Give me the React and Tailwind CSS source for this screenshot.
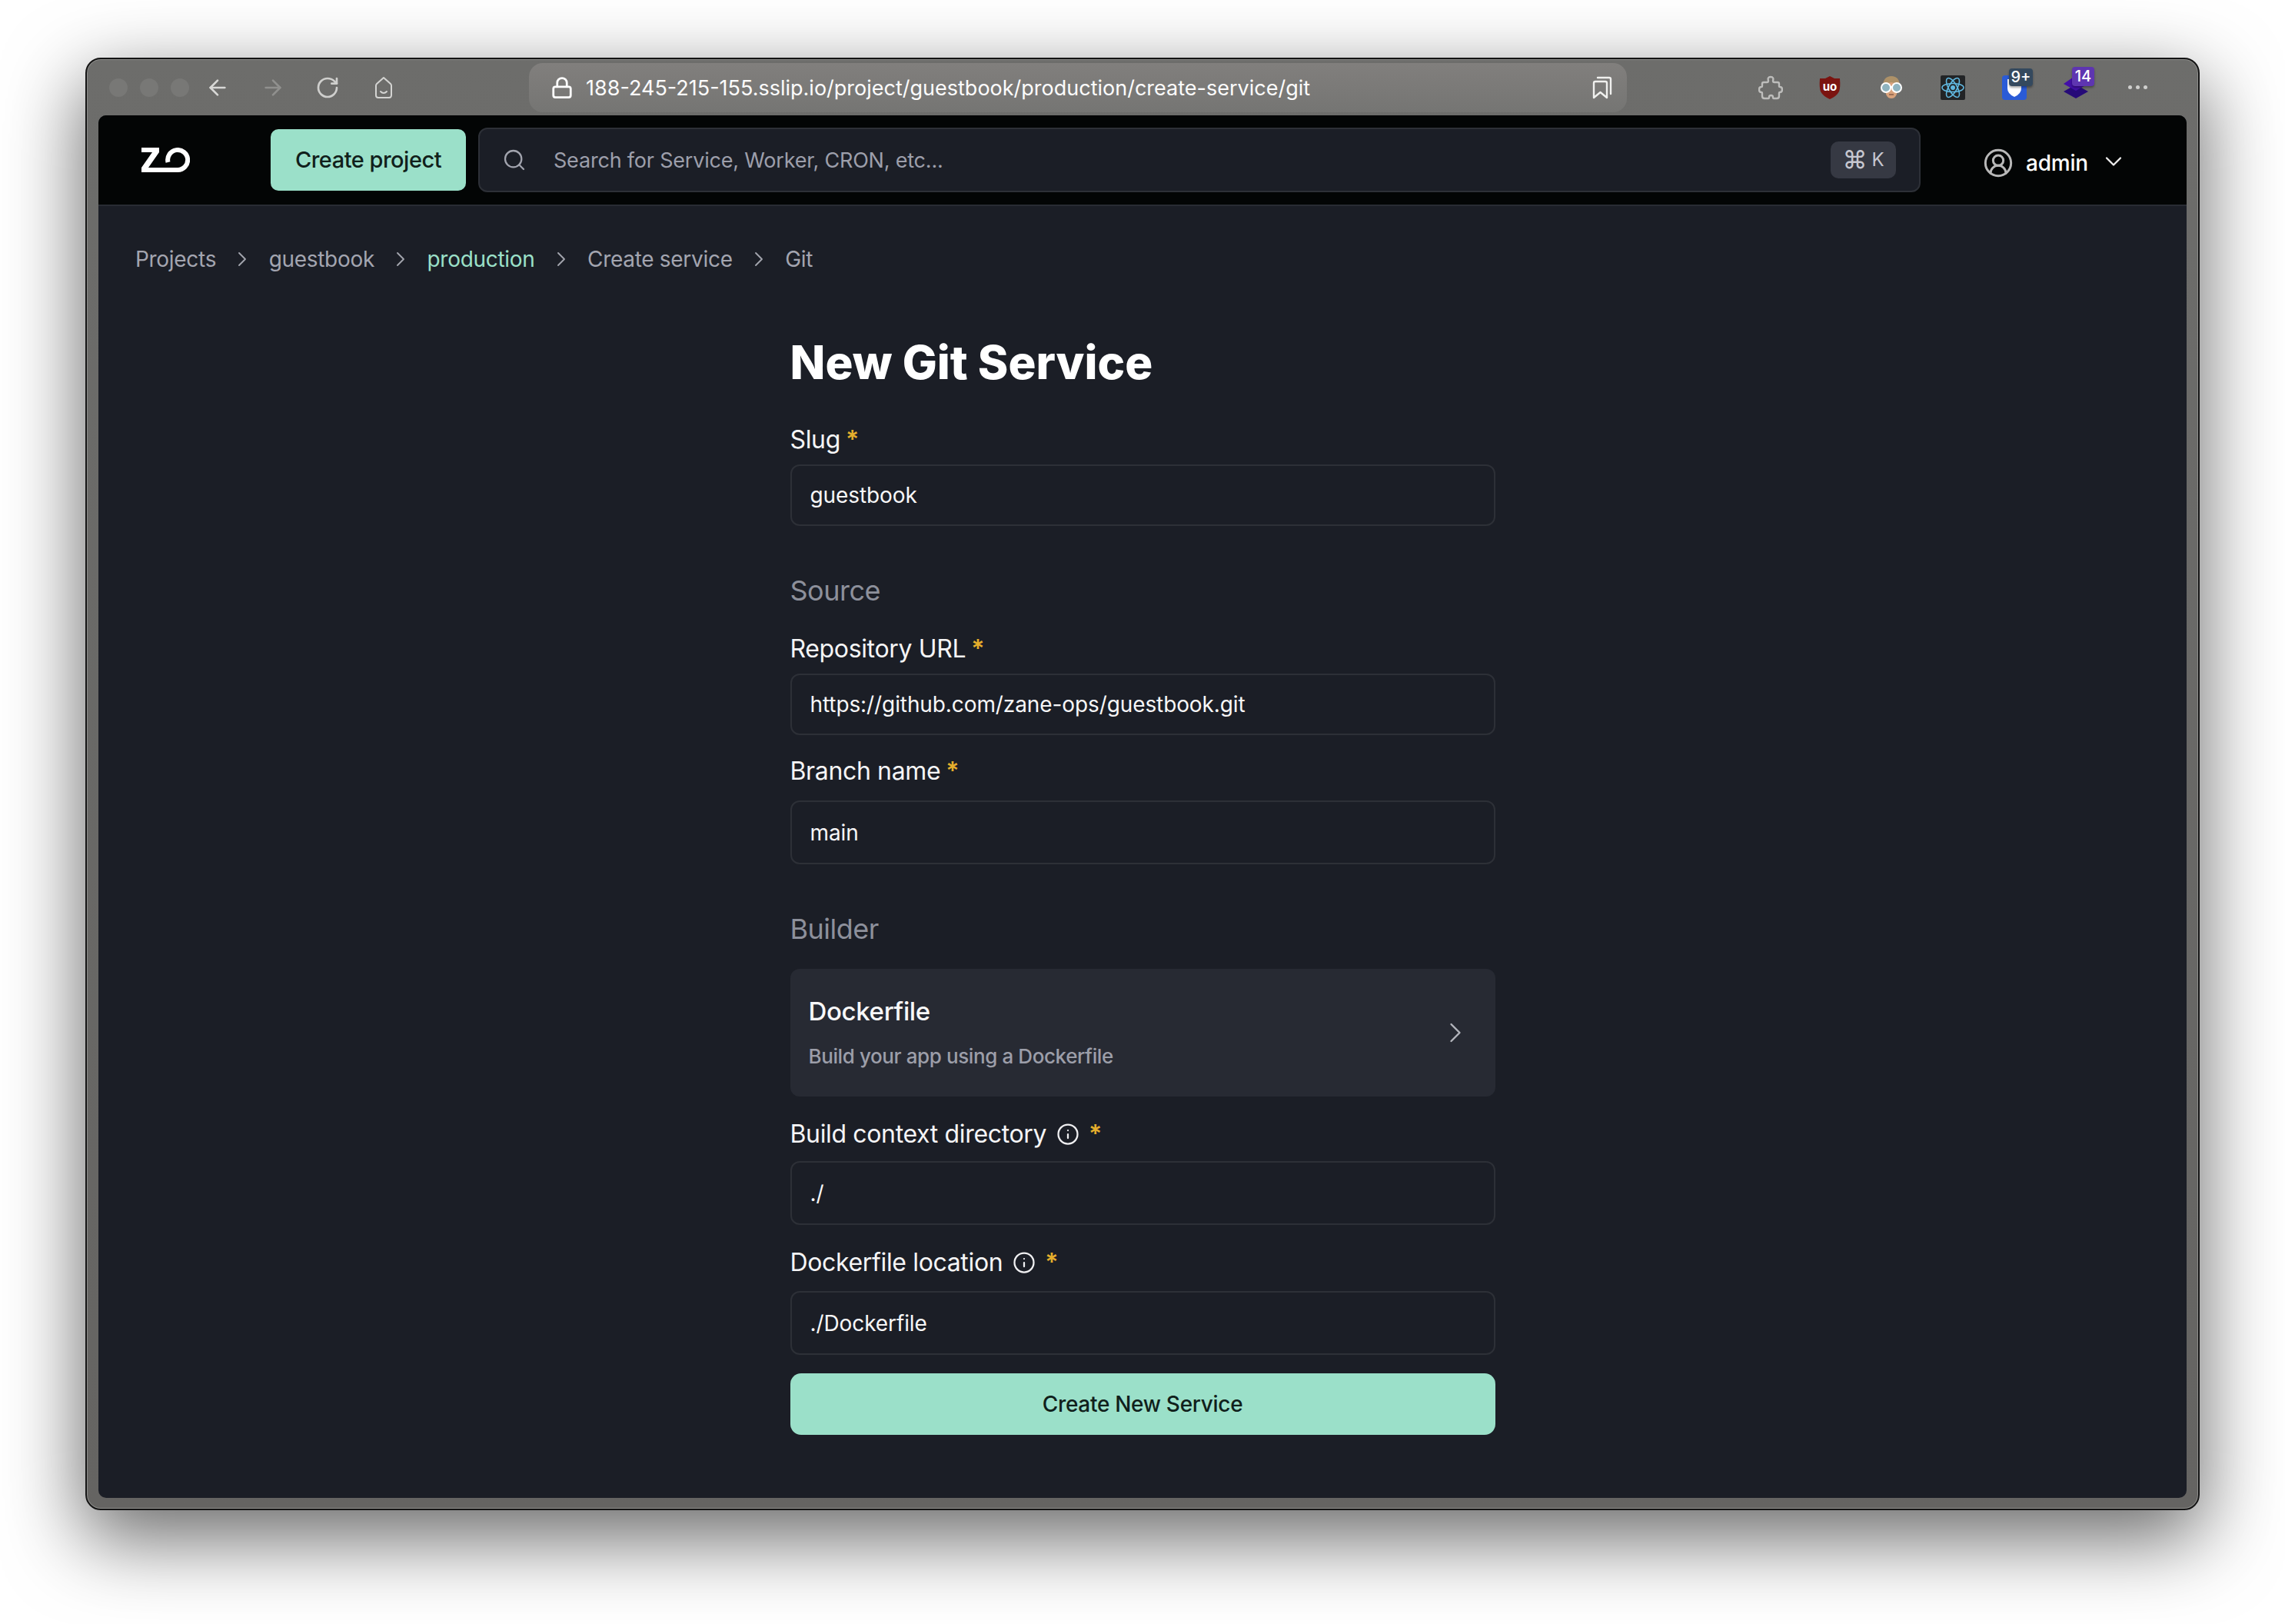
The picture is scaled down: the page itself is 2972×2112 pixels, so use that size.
import React from "react";
import { ArrowLeft, ArrowRight, RotateCw, Lock, Search, CircleUserRound, ChevronDown, ChevronRight, Info } from "lucide-react";

function PuzzleIcon() {
  return (
    <svg width="32" height="32" viewBox="0 0 32 32" fill="none" stroke="#bdbdbb" strokeWidth="2.4" strokeLinejoin="round" strokeLinecap="round">
      <path d="M13 7 Q11.500 2 16 2 Q20.500 2 19 7 Q19 9 21 9 H25 Q27 9 27 11 V14 Q27 15 28 15 Q31 15 31 18.500 Q31 22 28 22 Q27 22 27 23 V27 Q27 30 24 30 H20 Q19 30 19 28.500 Q19 26 16.500 26 Q14 26 14 28.500 Q14 30 13 30 H8 Q5 30 5 27 V23 Q5 22 4 22 Q1 22 1 18.500 Q1 15 4 15 Q5 15 5 14 V11 Q5 9 7 9 H11 Q13 9 13 7 Z" />
    </svg>
  );
}

function HomeFace() {
  return (
    <svg width="32" height="32" viewBox="0 0 32 32" fill="none" stroke="#d4d4d2" strokeWidth="2" strokeLinejoin="round" strokeLinecap="round">
      <path d="M16 3 L25 11 Q26 12 26 13.5 V26 Q26 29 23 29 H9 Q6 29 6 26 V13.5 Q6 12 7 11 Z" />
      <path d="M12 21 Q16 25 20 21" />
    </svg>
  );
}

function Bookmarks() {
  return (
    <svg width="32" height="32" viewBox="0 0 32 32" fill="none" stroke="#f0f0ee" strokeWidth="2.4" strokeLinejoin="round" strokeLinecap="round">
      <path d="M5 29 V10 Q5 8 7 8 H20 Q22 8 22 10 V29 L13.500 22 Z" />
      <path d="M10 3 H25 Q27 3 27 5 V24" />
    </svg>
  );
}

function Ublock() {
  return (
    <svg width="32" height="32" viewBox="0 0 32 32">
      <path d="M16 1 L22 4 H29 Q30 16 28 21 Q25 27 16 31 Q7 27 4 21 Q2 16 3 4 H10 Z" fill="#7b1410" />
      <text x="16" y="20" textAnchor="middle" fontSize="15" fontWeight="700" fill="#ffffff" fontFamily="Inter, sans-serif">uo</text>
    </svg>
  );
}

function Face() {
  return (
    <svg width="32" height="32" viewBox="0 0 32 32">
      <path d="M5 15 Q5 1 16 1 Q27 1 27 15 L27 20 H5 Z" fill="#ad9168" />
      <path d="M8 16 Q8 10 16 9 Q24 10 24 16 Q24 30 16 30 Q8 30 8 16 Z" fill="#d8a27c" />
      <path d="M13 25 H19" stroke="#8a5e4a" strokeWidth="1.500" />
      <circle cx="9" cy="16" r="6" fill="#8fb4c0" stroke="#ffffff" strokeWidth="2" />
      <circle cx="23" cy="16" r="6" fill="#8fb4c0" stroke="#ffffff" strokeWidth="2" />
      <path d="M15 15 H17" stroke="#ffffff" strokeWidth="2" />
    </svg>
  );
}

function ReactLogo() {
  return (
    <svg width="32" height="32" viewBox="0 0 32 32">
      <rect width="32" height="32" rx="2" fill="#222426" />
      <g fill="none" stroke="#61b8e0" strokeWidth="1.600">
        <ellipse cx="16" cy="16" rx="14" ry="5.500" />
        <ellipse cx="16" cy="16" rx="14" ry="5.500" transform="rotate(60 16 16)" />
        <ellipse cx="16" cy="16" rx="14" ry="5.500" transform="rotate(120 16 16)" />
      </g>
      <circle cx="16" cy="16" r="3" fill="#61b8e0" />
    </svg>
  );
}

function Bitwarden() {
  return (
    <svg width="32" height="32" viewBox="0 0 32 32">
      <rect width="32" height="32" rx="4" fill="#2a5bd7" />
      <path d="M7 5 H25 V17 Q25 24 16 28 Q7 24 7 17 Z" fill="#ffffff" />
    </svg>
  );
}

function Layers() {
  return (
    <svg width="32" height="32" viewBox="0 0 32 32">
      <path d="M16 12 L32 21 L16 30 L0 21 Z" fill="#260a78" />
      <path d="M16 0 L32 11 L16 20 L0 11 Z" fill="#430fa8" />
    </svg>
  );
}

function ZaneLogo() {
  return (
    <svg width="63" height="32" viewBox="0 0 63 32">
      <path d="M0 0 H23 V6 L9 26 H47 V32 H0 V26 L14 6 H0 Z" fill="#ffffff" />
      <path d="M47 29 A13 13 0 1 0 34.500 19" fill="none" stroke="#ffffff" strokeWidth="6" />
    </svg>
  );
}

function Badge({ children, className }) {
  return (
    <span className={"absolute flex items-center justify-center rounded-[4px] text-[20px] font-medium leading-none text-white shadow-[0_2px_3px_rgba(0,0,0,0.35)] " + className}>
      {children}
    </span>
  );
}

function Sep() {
  return <ChevronRight size={32} strokeWidth={1.4} className="mx-[18.25px] text-[#a3a5ae]" />;
}

function Star() {
  return <span className="flex h-10 items-start pt-[4px] text-[32px] font-semibold leading-none text-[#e5ae2c]">*</span>;
}

function Field({ label, value, info, height, labelGap, className }) {
  return (
    <div className={className}>
      <div className={"flex h-10 items-center text-[32px] tracking-[-0.35px] text-[#f5f5f6] " + labelGap}>
        <span>{label}</span>
        {info ? <Info size={30} strokeWidth={1.8} className="ml-[13px] text-[#f0f0f2]" /> : null}
        <span className={info ? "ml-[12px] flex" : "ml-[7px] flex"}>
          <Star />
        </span>
      </div>
      <div className={"flex items-center rounded-[12px] border-2 border-[#2d3037] bg-[#1b1e26] px-6 text-[28px] tracking-[-0.1px] text-[#f7f7f8] " + height}>
        {value}
      </div>
    </div>
  );
}

export default function App() {
  return (
    <div className="h-[2112px] w-[2972px] overflow-hidden bg-white pl-[111px] pt-[75px] font-['Inter',sans-serif]">
      <div className="box-border flex h-[1889px] w-[2750px] flex-col overflow-hidden rounded-[20px] border-2 border-[#141414] bg-gradient-to-b from-[#6d6d6b] to-[#656462] shadow-[0_34px_100px_4px_rgba(0,0,0,0.58),inset_0_0_0_1px_#8d8d8b]">
        {/* Browser toolbar */}
        <div className="flex h-[73px] shrink-0 items-center pl-[29px]">
          <div className="flex gap-4">
            <span className="h-6 w-6 rounded-full bg-[#787876]" />
            <span className="h-6 w-6 rounded-full bg-[#787876]" />
            <span className="h-6 w-6 rounded-full bg-[#787876]" />
          </div>
          <ArrowLeft size={32} strokeWidth={2} className="ml-[21px] text-[#d8d8d6]" />
          <ArrowRight size={32} strokeWidth={2} className="ml-[40px] text-[#90908e]" />
          <RotateCw size={32} strokeWidth={2} className="ml-[39px] text-[#cfcfcd]" />
          <div className="ml-[41px]"><HomeFace /></div>
          <div className="ml-[173px] flex h-[64px] w-[1428px] items-center rounded-[18px] bg-gradient-to-b from-[#817f7d] to-[#757573] pl-[28px] pr-[16px]">
            <Lock size={30} strokeWidth={2.2} className="text-white" />
            <span className="ml-[16px] flex-1 pt-[4px] text-[27px] text-[#fcfcfc]">188-245-215-155.sslip.io/project/guestbook/production/create-service/git</span>
            <Bookmarks />
          </div>
          <div className="ml-[171px]"><PuzzleIcon /></div>
          <div className="ml-[45px]"><Ublock /></div>
          <div className="ml-[48px]"><Face /></div>
          <div className="ml-[48px]"><ReactLogo /></div>
          <div className="relative ml-[48px]">
            <Bitwarden />
            <Badge className="-top-[9px] left-[9px] h-[23px] w-[31px] bg-[#34495e]">9+</Badge>
          </div>
          <div className="relative ml-[48px]">
            <Layers />
            <Badge className="-top-[11px] left-[11px] h-[25px] w-[29px] bg-[#5e35b1]">14</Badge>
          </div>
          <div className="ml-[52px] flex gap-[5px]">
            <span className="h-[5px] w-[5px] rounded-full bg-[#cfcfcd]" />
            <span className="h-[5px] w-[5px] rounded-full bg-[#cfcfcd]" />
            <span className="h-[5px] w-[5px] rounded-full bg-[#cfcfcd]" />
          </div>
        </div>

        {/* Page */}
        <div className="mx-[15px] flex h-[1798px] flex-col overflow-hidden rounded-[10px] bg-[#1b1e26]">
          <header className="flex h-[118px] shrink-0 items-center border-b-2 border-[#292c33] bg-[#030505] pl-[56px]">
            <ZaneLogo />
            <button className="ml-[105px] h-[80px] w-[254px] rounded-[10px] bg-[#9be0c9] text-[29px] font-medium tracking-[-0.5px] text-[#10201b]">Create project</button>
            <div className="ml-4 flex h-[84px] w-[1876px] items-center rounded-[12px] border-2 border-[#2d3037] bg-[#1b1e26] pl-[29px] pr-[30px]">
              <Search size={32} strokeWidth={1.7} className="text-[#a2a4ae]" />
              <span className="ml-[35px] flex-1 pt-[3px] text-[27px] tracking-[-0.2px] text-[#9d9fab]">Search for Service, Worker, CRON, etc...</span>
              <span className="flex h-12 w-[85px] items-center justify-center gap-[6px] rounded-[10px] bg-[#363943] text-[32px] leading-none text-[#c6c7d0]">⌘<span className="text-[24px]">K</span></span>
            </div>
            <CircleUserRound size={40} strokeWidth={1.8} className="relative top-1 ml-[81px] text-[#b8b8b8]" />
            <span className="relative top-1 ml-[16px] text-[28px] font-medium tracking-[-0.2px] text-white">admin</span>
            <ChevronDown size={36} strokeWidth={1.5} className="relative top-[2px] ml-[15px] text-[#f0f0f0]" />
          </header>

          <main className="flex flex-col">
            <nav className="ml-[48px] mt-[49px] flex h-10 items-center text-[28px] tracking-[-0.3px] text-[#a3a5b0]">
              <span>Projects</span>
              <Sep />
              <span>guestbook</span>
              <Sep />
              <span className="text-[#9be0c9]">production</span>
              <Sep />
              <span>Create service</span>
              <Sep />
              <span>Git</span>
            </nav>

            <form className="mx-auto mt-[82px] w-[917px]">
              <h1 className="h-16 text-[60px] font-extrabold leading-[64px] tracking-normal text-white">New Git Service</h1>
              <Field className="mt-[49px]" label="Slug" value="guestbook" height="h-[80px]" labelGap="mb-3" />
              <h2 className="mt-[64px] h-10 text-[36px] leading-10 tracking-[-0.5px] text-[#8d909b]">Source</h2>
              <Field className="mt-[36px]" label="Repository URL" value="https://github.com/zane-ops/guestbook.git" height="h-[80px]" labelGap="mb-3" />
              <Field className="mt-[27px]" label="Branch name" value="main" height="h-[83px]" labelGap="mb-[18px]" />
              <h2 className="mt-[64px] h-10 text-[36px] leading-10 tracking-[-0.5px] text-[#8d909b]">Builder</h2>
              <div className="mt-[32px] flex h-[166px] items-center justify-between rounded-[12px] bg-[#272a33] pl-6 pr-[30px]">
                <div className="pt-[3px]">
                  <div className="text-[33px] font-medium leading-10 tracking-[-0.35px] text-[#f8f8f9]">Dockerfile</div>
                  <div className="mt-[19px] text-[26px] font-medium leading-10 tracking-[-0.4px] text-[#9c9ea9]">Build your app using a Dockerfile</div>
                </div>
                <ChevronRight size={44} strokeWidth={1.3} className="text-[#b4b6bd]" />
              </div>
              <Field className="mt-[29px]" label="Build context directory" value="./" info height="h-[83px]" labelGap="mb-[15px]" />
              <Field className="mt-[29px]" label="Dockerfile location" value="./Dockerfile" info height="h-[83px]" labelGap="mb-[17px]" />
              <button className="mt-[24px] h-[80px] w-full rounded-[14px] bg-[#9be0c9] text-[28px] font-medium tracking-[-0.3px] text-[#10201b]">Create New Service</button>
            </form>
          </main>
        </div>
      </div>
    </div>
  );
}
